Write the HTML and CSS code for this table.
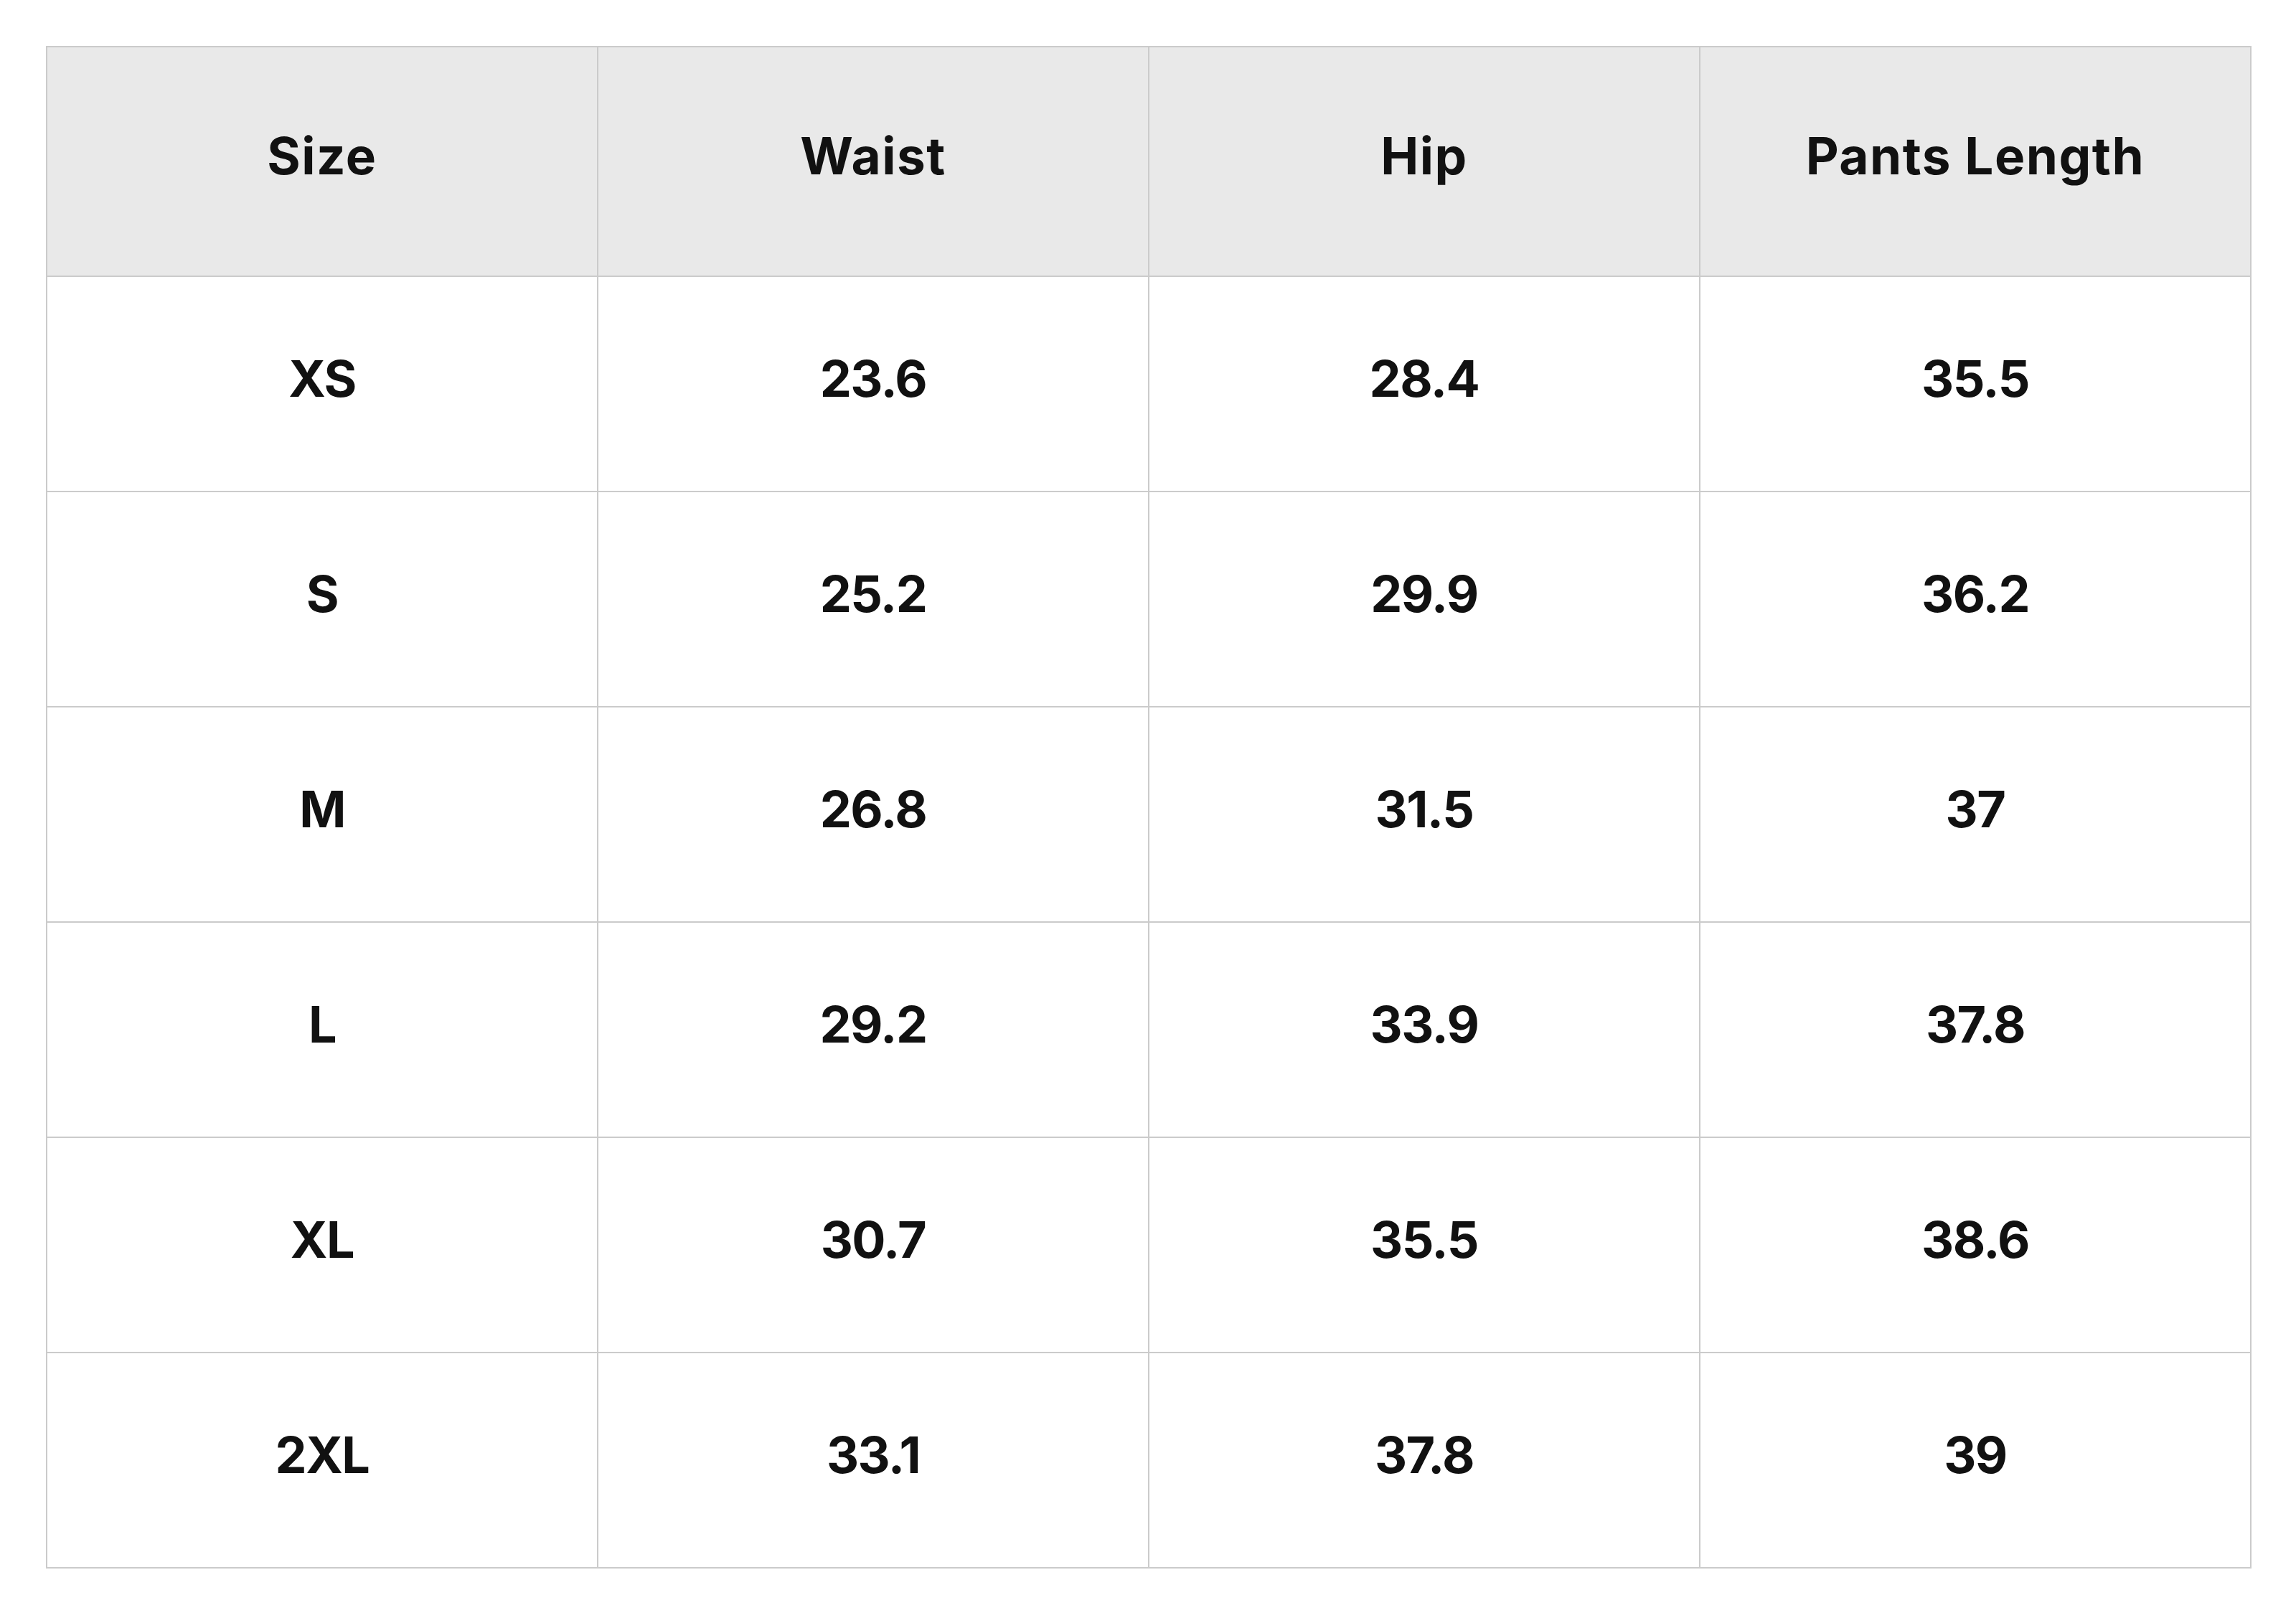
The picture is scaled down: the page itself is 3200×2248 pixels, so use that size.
FILE: index.html
```html
<!DOCTYPE html>
<html lang="en">
<head>
<meta charset="utf-8">
<title>Size Chart</title>
<link rel="stylesheet" href="styles.css">
</head>
<body>
<table class="size-table">
  <thead>
    <tr><th>Size</th><th>Waist</th><th>Hip</th><th>Pants Length</th></tr>
  </thead>
  <tbody>
    <tr><td>XS</td><td>23.6</td><td>28.4</td><td>35.5</td></tr>
    <tr><td>S</td><td>25.2</td><td>29.9</td><td>36.2</td></tr>
    <tr><td>M</td><td>26.8</td><td>31.5</td><td>37</td></tr>
    <tr><td>L</td><td>29.2</td><td>33.9</td><td>37.8</td></tr>
    <tr><td>XL</td><td>30.7</td><td>35.5</td><td>38.6</td></tr>
    <tr><td>2XL</td><td>33.1</td><td>37.8</td><td>39</td></tr>
  </tbody>
</table>
</body>
</html>
```

FILE: styles.css
```css
html, body {
  margin: 0;
  padding: 0;
  background: #ffffff;
}
body {
  padding: 64px;
  font-family: Inter, "Liberation Sans", sans-serif;
  color: #111111;
}
.size-table {
  border-collapse: separate;
  border-spacing: 2px;
  background: #cbcbcb;
  table-layout: fixed;
  width: 3074px;
}
.size-table th,
.size-table td {
  width: 766px;
  padding: 0 0 14px 0;
  text-align: center;
  vertical-align: middle;
  font-size: 70px;
  font-weight: 700;
  line-height: 1.2;
  box-sizing: border-box;
}
.size-table th {
  height: 318px;
  background: #e9e9e9;
  font-size: 71px;
  letter-spacing: 1.5px;
}
.size-table td {
  height: 298px;
  background: #ffffff;
  letter-spacing: -1.5px;
}
```
